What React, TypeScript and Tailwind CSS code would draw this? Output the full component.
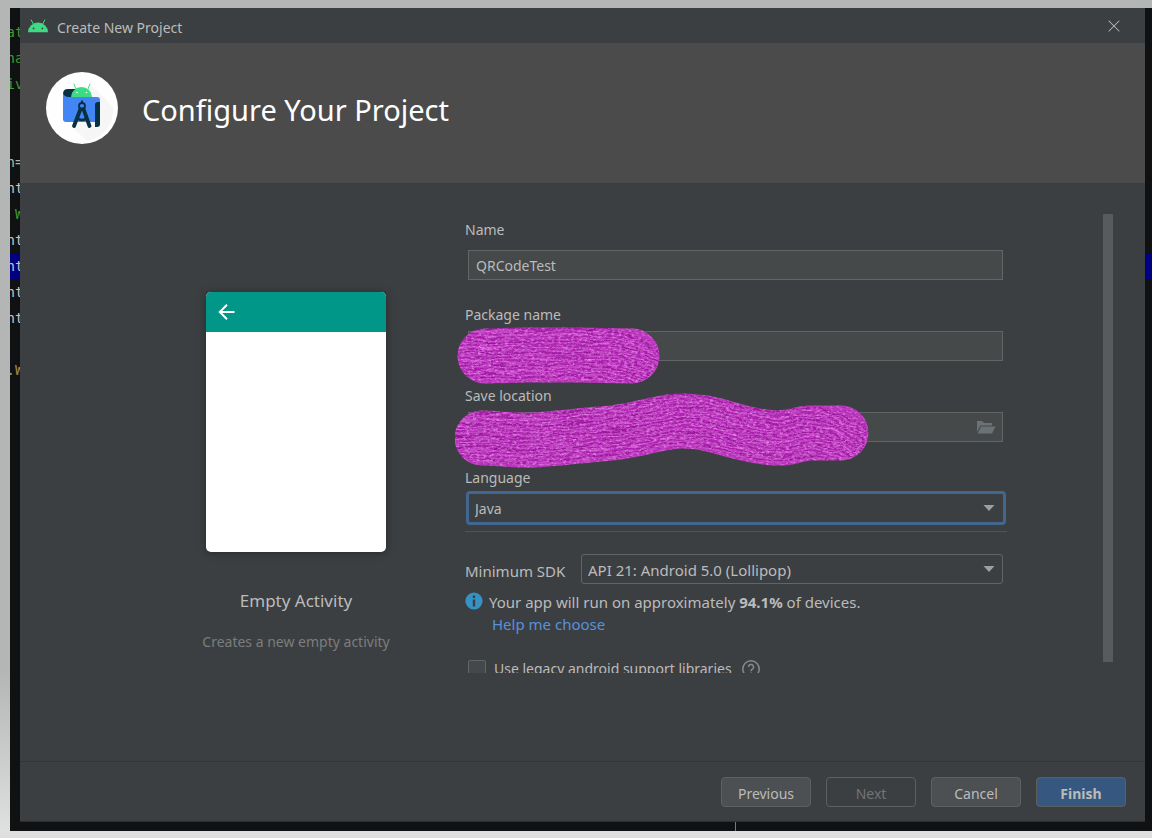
import { X } from "lucide-react";
import { useId, type ReactNode } from "react";

const codeLines = [
  { text: "at", className: "text-[#3f9a2c]" },
  { text: "na", className: "text-[#3f9a2c]" },
  { text: "iv", className: "text-[#3f9a2c]" },
  { text: "", className: "" },
  { text: "", className: "" },
  { text: "n=", className: "text-[#a9b7a5]" },
  { text: "nt", className: "text-[#c4c4c4]" },
  { text: " W", className: "text-[#3f9a2c]" },
  { text: "nt", className: "text-[#c4c4c4]" },
  { text: "nt", className: "bg-[#000080] text-[#c4c4c4]" },
  { text: "nt", className: "text-[#c4c4c4]" },
  { text: "nt", className: "text-[#c4c4c4]" },
  { text: "", className: "" },
  { text: ".W", className: "text-[#b08a4a]" },
];

function AndroidHead() {
  return (
    <svg viewBox="0 0 20 14" className="h-3.5 w-5 shrink-0" aria-hidden="true">
      <path d="M0 13.2a10 9.6 0 0 1 20 0z" fill="#3ddc84" />
      <path
        d="M5.6 5.6 3.2 1M14.4 5.6 16.8 1"
        stroke="#3ddc84"
        strokeWidth="1"
        strokeLinecap="round"
      />
      <circle cx="5.6" cy="9.4" r="0.9" fill="#3c3f41" />
      <circle cx="14.4" cy="9.4" r="0.9" fill="#3c3f41" />
    </svg>
  );
}

function StudioLogo() {
  return (
    <svg viewBox="0 0 72 72" className="size-[72px] shrink-0" aria-hidden="true">
      <circle cx="36" cy="36" r="36" fill="#fefefe" />
      <path
        d="M46 14 67 35a31 31 0 0 1-26 34L27 56l6-30z"
        fill="#000"
        fillOpacity="0.03"
      />
      <path d="M17 25v-3q0-5 5-5h9v9z" fill="#073042" />
      <path
        d="M17 21q1 4 6 4h28q3 0 3 3v5h-4v17H20q-3 0-3-3z"
        fill="#4285f4"
      />
      <path d="M25 25a10.5 10 0 0 1 21 0z" fill="#3ddc84" />
      <path
        d="m30 17-2-5M42 17l2-5"
        stroke="#3ddc84"
        strokeWidth="1"
        strokeLinecap="round"
      />
      <circle cx="31" cy="20.5" r="0.8" fill="#fff" />
      <circle cx="40.5" cy="20.5" r="0.8" fill="#fff" />
      <path
        d="M49 33q0-3 3-3h2v22q0 3-3 3h-2z"
        fill="#073042"
      />
      <circle cx="36" cy="34" r="3" fill="none" stroke="#073042" strokeWidth="1.8" />
      <path d="M36 28.5v3" stroke="#073042" strokeWidth="2" />
      <path
        d="m34.5 37-6.5 17M37.5 37l6 17"
        stroke="#073042"
        strokeWidth="3.8"
        strokeLinecap="round"
      />
      <path d="M31 46q5 4 10 0" fill="none" stroke="#073042" strokeWidth="2.6" />
    </svg>
  );
}

// brush stroke: one thick line with finer strands running along it
function Brush({
  d,
  strand,
  width,
  height,
  className,
}: {
  d: string;
  strand: string;
  width: number;
  height: number;
  className: string;
}) {
  const id = useId();
  const strands = Array.from({ length: 13 }, (_, i) => -26 + i * 4);
  return (
    <svg
      width={width}
      height={height}
      viewBox={`0 0 ${width} ${height}`}
      fill="none"
      strokeLinecap="round"
      strokeLinejoin="round"
      aria-hidden="true"
      className={className}
    >
      <defs>
        <mask id={`${id}m`} maskUnits="userSpaceOnUse" x="0" y="0" width={width} height={height}>
          <path d={d} stroke="#fff" strokeWidth="55" />
        </mask>
        <filter
          id={`${id}w`}
          filterUnits="userSpaceOnUse"
          x="0"
          y="0"
          width={width}
          height={height}
        >
          <feTurbulence type="fractalNoise" baseFrequency="0.04 0.15" numOctaves="3" seed="4" />
          <feDisplacementMap
            in="SourceGraphic"
            scale="8"
            xChannelSelector="R"
            yChannelSelector="G"
          />
        </filter>
        <filter id={`${id}n`} x="0" y="0" width="100%" height="100%">
          <feTurbulence type="fractalNoise" baseFrequency="0.3 0.5" numOctaves="3" seed="8" />
          <feColorMatrix values="0 0 0 0 0.95  0 0 0 0 0.5  0 0 0 0 0.95  4 0 0 0 -1.9" />
        </filter>
        <filter id={`${id}k`} x="0" y="0" width="100%" height="100%">
          <feTurbulence type="fractalNoise" baseFrequency="0.3 0.6" numOctaves="3" seed="21" />
          <feColorMatrix values="0 0 0 0 0.4  0 0 0 0 0  0 0 0 0 0.4  4 0 0 0 -1.9" />
        </filter>
      </defs>
      <g mask={`url(#${id}m)`}>
        <rect width={width} height={height} fill="#b93abc" />
        <g filter={`url(#${id}w)`}>
          {strands.map((y, i) => (
            <g key={y} transform={`translate(0 ${y})`}>
              <path
                d={strand}
                stroke="#870d8b"
                strokeOpacity={i % 3 === 0 ? 0.85 : 0.5}
                strokeWidth="1"
              />
              <path
                d={strand}
                stroke="#e070e3"
                strokeOpacity={i % 3 === 1 ? 0.75 : 0.4}
                strokeWidth="1"
                transform="translate(0 2)"
              />
            </g>
          ))}
        </g>
        <rect width={width} height={height} filter={`url(#${id}n)`} opacity="0.4" />
        <rect width={width} height={height} filter={`url(#${id}k)`} opacity="0.4" />
      </g>
    </svg>
  );
}

function SelectArrow() {
  return (
    <svg
      viewBox="0 0 12 7"
      className="pointer-events-none absolute top-1/2 right-2 h-[7px] w-3 -translate-y-1/2"
      aria-hidden="true"
    >
      <path d="M0.5 0.5h11L6 6.5z" fill="#9da0a2" />
    </svg>
  );
}

function Field({
  id,
  label,
  value,
  children,
  className = "",
  inputClassName = "",
}: {
  id: string;
  label: string;
  value?: string;
  children?: ReactNode;
  className?: string;
  inputClassName?: string;
}) {
  return (
    <div className={className}>
      <label htmlFor={id} className="block">
        {label}
      </label>
      <div className={`relative mr-1 ml-[3px] ${inputClassName}`}>
        <input
          id={id}
          type="text"
          defaultValue={value}
          className="block h-[30px] w-full border border-[#646464] bg-[#45494a] px-[7px] outline-none"
        />
        {children}
      </div>
    </div>
  );
}

function Preview() {
  return (
    <div className="ml-[184px] flex w-[184px] shrink-0 flex-col items-center pt-[109px]">
      <div className="h-[260px] w-[180px] overflow-hidden rounded-[5px] bg-white shadow-[0_1px_8px_rgba(0,0,0,0.35)]">
        <div className="flex h-10 items-center bg-[#009688] px-3">
          <svg viewBox="0 0 18 18" className="size-[18px]" aria-hidden="true">
            <path
              d="M16.5 9H2M9 1.8 1.8 9 9 16.2"
              fill="none"
              stroke="#fff"
              strokeWidth="2"
            />
          </svg>
        </div>
      </div>
      <h2 className="mt-[39px] text-[17px] leading-5">Empty Activity</h2>
      <p className="mt-[21px] whitespace-nowrap leading-5 text-[#7b7d7e]">
        Creates a new empty activity
      </p>
    </div>
  );
}

function ProjectForm() {
  return (
    <form className="ml-[67px] h-[459px] min-w-0 flex-1 overflow-hidden pt-1.5 pr-24 pl-2.5">
      <Field id="name" label="Name" value="QRCodeTest" inputClassName="mt-2.5" />
      <Field id="package" label="Package name" className="mt-[25px]" inputClassName="mt-1.5">
        <Brush
          d="M30 31 70 30 120 30 177 31"
          strand="M-10 31 70 30 120 30 150 31Q180 35 215 60"
          width={220}
          height={62}
          className="pointer-events-none absolute -top-1.5 -left-[13px]"
        />
      </Field>
      <Field id="location" label="Save location" className="mt-[25px]" inputClassName="mt-1.5">
        <button
          type="button"
          aria-label="Browse"
          className="absolute top-1/2 right-[7px] -translate-y-1/2"
        >
          <svg viewBox="0 0 20 14" className="block h-3.5 w-5" aria-hidden="true">
            <path d="M1 12V1h5l2 2h8v2.5H4.5z" fill="#6b7276" />
            <path d="M5.2 6.5H19.5L16 13.5H1.6z" fill="#6b7276" />
          </svg>
        </button>
        <Brush
          d="M32 48C50 48 65 51 85 50S125 46 150 44 180 40 195 37 220 30 235 31 250 31 275 38 310 47 325 48 345 44 360 43L391 43"
          strand="M-10 47L32 48C50 48 65 51 85 50S125 46 150 44 180 40 195 37 220 30 235 31 250 31 275 38 310 47 325 48 345 44 360 43Q390 46 425 72"
          width={420}
          height={82}
          className="pointer-events-none absolute -top-[22px] -left-[18px]"
        />
      </Field>
      <div className="mt-[26px]">
        <label htmlFor="language" className="block">
          Language
        </label>
        <div className="relative mt-[3px] mr-px ml-px">
          <select
            id="language"
            className="block h-[34px] w-full appearance-none rounded-[4px] border-3 border-[#41668f] bg-[#3c3f41] px-1.5 pt-0.5 outline-none"
          >
            <option>Java</option>
            <option>Kotlin</option>
          </select>
          <div className="pointer-events-none absolute inset-y-0 right-[3px]">
            <SelectArrow />
          </div>
        </div>
      </div>
      <hr className="mt-1.5 border-[#515355]" />
      <div className="mt-[22px] mr-1 flex items-center text-[15px]">
        <label htmlFor="sdk" className="w-[116px] shrink-0 pt-1">
          Minimum SDK
        </label>
        <div className="relative min-w-0 flex-1">
          <select
            id="sdk"
            className="block h-[30px] w-full appearance-none rounded-[3px] border border-[#646464] bg-[#3c3f41] px-1.5 pt-0.5 outline-none"
          >
            <option>API 21: Android 5.0 (Lollipop)</option>
          </select>
          <SelectArrow />
        </div>
      </div>
      <div className="mt-2 flex gap-1.5">
        <svg viewBox="0 0 18 18" className="size-[18px] shrink-0" aria-hidden="true">
          <circle cx="9" cy="9" r="8.6" fill="#3592c4" />
          <path d="M9 3.5v2.5M9 7.5v7" stroke="#3c3f41" strokeWidth="2.4" />
        </svg>
        <div className="text-[15px]">
          <p>
            Your app will run on approximately <b>94.1%</b> of devices.
          </p>
          <a href="#help" className="mt-0.5 ml-[3px] block text-[#5891dc]">
            Help me choose
          </a>
        </div>
      </div>
      <div className="mt-[25px] ml-[3px] flex items-center">
        <input
          id="legacy"
          type="checkbox"
          className="size-[18px] appearance-none rounded-[2px] border border-[#646464] bg-[#43494a]"
        />
        <label htmlFor="legacy" className="ml-2">
          Use legacy android support libraries
        </label>
        <svg viewBox="0 0 18 18" className="ml-2.5 size-[18px]" aria-hidden="true">
          <circle cx="9" cy="9" r="8.2" fill="none" stroke="#87898b" strokeWidth="1.5" />
          <path
            d="M6.5 7a2.5 2.5 0 1 1 3.6 2.3Q9 10 9 11.2M9 12.5v1.5"
            fill="none"
            stroke="#87898b"
            strokeWidth="1.5"
          />
        </svg>
      </div>
    </form>
  );
}

const footerButton =
  "h-[30px] w-[90px] rounded-[4px] border border-[#5e6060] pt-1 leading-5";

export default function App() {
  return (
    <div className="flex min-h-screen flex-col bg-linear-to-b from-[#b3b6b4] from-80% to-[#e1e2e2] pt-2 pl-2.5 font-['Noto_Sans',sans-serif] text-[14px] leading-5 text-[#bbbbbb]">
      <div className="flex flex-1 bg-[#101113]">
        <div className="w-2.5 shrink-0 overflow-hidden pt-[11px] font-['DejaVu_Sans_Mono',monospace] text-[14px]">
          {codeLines.map((line, i) => (
            <div
              key={i}
              className={`flex h-[26px] items-center justify-center whitespace-pre ${line.className}`}
            >
              {line.text}
            </div>
          ))}
        </div>

        {/* Dialog */}
        <div className="flex min-w-0 flex-1 flex-col border-b border-[#2b2d2e] bg-[#3c3f41]">
          <header className="flex h-[35px] items-center gap-[9px] pr-[23px] pl-2">
            <AndroidHead />
            <span className="flex-1 pt-1">Create New Project</span>
            <button type="button" aria-label="Close">
              <X className="size-4 scale-125 text-[#b4b6b7]" strokeWidth={1.2} />
            </button>
          </header>

          <div className="flex h-[140px] items-start gap-6 bg-[#4b4b4b] pt-[29px] pl-[26px]">
            <StudioLogo />
            <h1 className="pt-[18px] text-[29px] leading-10 text-white">
              Configure Your Project
            </h1>
          </div>

          <main className="flex flex-1">
            <Preview />
            <div className="flex min-w-0 flex-1 pt-[31px]">
              <ProjectForm />
              <div className="mr-8 h-[448px] w-2.5 shrink-0 bg-[#595a5b]" />
            </div>
          </main>

          <footer className="flex h-[60px] items-center justify-end gap-[15px] border-t border-[#323436] pr-[19px]">
            <button type="button" className={`${footerButton} bg-[#4c5052]`}>
              Previous
            </button>
            <button type="button" disabled className={`${footerButton} text-[#727475]`}>
              Next
            </button>
            <button type="button" className={`${footerButton} bg-[#4c5052]`}>
              Cancel
            </button>
            <button type="submit" className={`${footerButton} bg-[#365880] font-bold`}>
              Finish
            </button>
          </footer>
        </div>

        <div className="w-[7px] shrink-0 pt-[245px]">
          <div className="h-[26px] bg-[#000080]" />
        </div>
      </div>
      <div className="h-[9px] bg-[#101113] pl-[725px]">
        <div className="h-full w-px bg-[#77797b]" />
      </div>
      <div className="-ml-2.5 h-[7px] bg-[#dedfdf]" />
    </div>
  );
}
